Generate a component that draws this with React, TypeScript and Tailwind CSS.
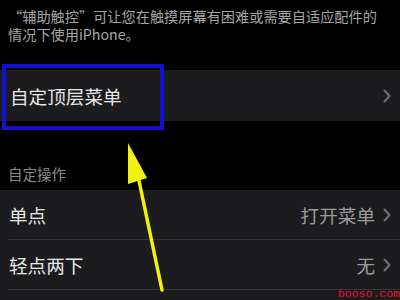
import React from "react";

const Chevron = () => (
  <svg width="8" height="14" viewBox="0 0 8 14" className="shrink-0">
    <path d="M1.5 1.5 L6.5 7 L1.5 12.5" fill="none" stroke="#707074" strokeWidth="2" strokeLinecap="round" strokeLinejoin="round" />
  </svg>
);

export default function App() {
  return (
    <div
      className="relative w-[400px] h-[300px] overflow-hidden bg-black"
      style={{ fontFamily: '"Noto Sans CJK SC", "Noto Sans", sans-serif' }}
    >
      <div className="px-[8px] pt-[7px] text-[14.2px] leading-[18px] text-[#a6a6a6]">
        <div className="h-[18px] whitespace-nowrap">“辅助触控”可让您在触摸屏幕有困难或需要自适应配件的</div>
        <div className="h-[18px] whitespace-nowrap">情况下使用iPhone。</div>
      </div>

      <div className="mt-[27px] h-[51px] bg-[#1c1c1e] flex items-center justify-between pl-[10px] pr-[9px]">
        <span className="text-[18.6px] text-[#e6e6e6]">自定顶层菜单</span>
        <Chevron />
      </div>

      <div className="h-[69px] flex items-end pl-[8px] pb-[6px]">
        <span className="text-[14.5px] leading-[20px] text-[#8a8a8a]">自定操作</span>
      </div>

      <div className="bg-[#1c1c1e] h-[110px]">
        <div className="h-[50px] flex items-center justify-between pl-[9px] pr-[9px] relative">
          <span className="text-[18.6px] text-[#e6e6e6]">单点</span>
          <div className="flex items-center gap-[8px]">
            <span className="text-[18.6px] text-[#9a9a9a]">打开菜单</span>
            <Chevron />
          </div>
          <div className="absolute left-[8px] right-0 bottom-0 h-px bg-[#333336]" />
        </div>
        <div className="h-[50px] flex items-center justify-between pl-[9px] pr-[9px] relative">
          <span className="text-[18.6px] text-[#e6e6e6]">轻点两下</span>
          <div className="flex items-center gap-[8px]">
            <span className="text-[18.6px] text-[#9a9a9a]">无</span>
            <Chevron />
          </div>
          <div className="absolute left-[8px] right-0 bottom-0 h-px bg-[#333336]" />
        </div>
      </div>

      {/* Blue highlight box */}
      <div className="absolute left-[2px] top-[64px] w-[162px] h-[66px] border-[4px] border-[#1212cc]" />

      {/* Yellow arrow */}
      <svg className="absolute left-0 top-0" width="400" height="300" viewBox="0 0 400 300">
        <line x1="138" y1="176" x2="162" y2="290" stroke="#f2f20a" strokeWidth="3.5" strokeLinecap="round" />
        <polygon points="128,143 128,184 147,178" fill="#f2f20a" />
      </svg>

      {/* watermark */}
      <div
        className="absolute right-0 bottom-0 text-[11.5px] leading-[13px] text-[#ec1030]"
        style={{ fontFamily: '"Liberation Mono", monospace' }}
      >
        booso.com
      </div>
    </div>
  );
}
